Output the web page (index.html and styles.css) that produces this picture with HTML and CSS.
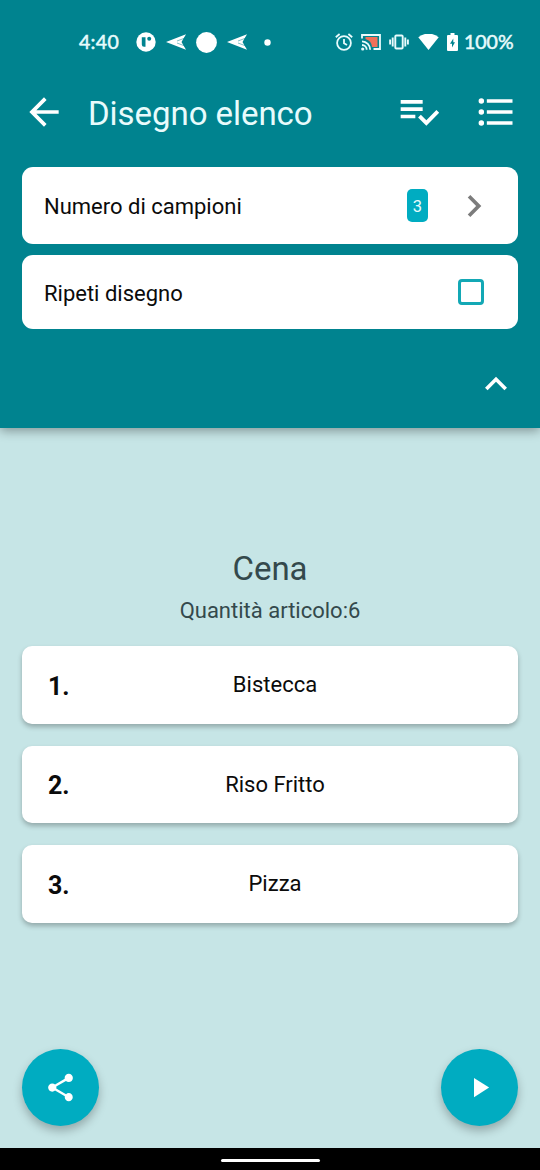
FILE: index.html
```html
<!DOCTYPE html>
<html lang="it">
<head>
<meta charset="utf-8">
<title>Disegno elenco</title>
<link rel="stylesheet" href="styles.css">
</head>
<body>
<div class="screen">
  <header class="header">
    <div class="status">
      <span class="clock">4:40</span>
      <div class="notifs">
        <svg width="20" height="20" viewBox="0 0 20 20"><circle cx="10" cy="10" r="9.700" fill="#fff"/><path d="M5.800 5.200h3.700v9.600H8a2.200 2.200 0 0 1-2.200-2.200z" fill="#00838f"/><circle cx="13.200" cy="6.800" r="2" fill="#00838f"/></svg>
        <svg width="20" height="16" viewBox="0 0 20 16"><path d="M0 8L20 .3 15.500 8 20 15.700z" fill="#fff"/><path d="M11 7L19 4M11 9l8 3" stroke="#00838f" stroke-width=".5"/></svg>
        <svg width="21" height="21" viewBox="0 0 21 21"><circle cx="10.500" cy="10.500" r="10.400" fill="#fff"/></svg>
        <svg width="20" height="16" viewBox="0 0 20 16"><path d="M0 8L20 .3 15.500 8 20 15.700z" fill="#fff"/><path d="M11 7L19 4M11 9l8 3" stroke="#00838f" stroke-width=".5"/></svg>
        <svg class="more-dot" width="7" height="7" viewBox="0 0 7 7"><circle cx="3.500" cy="3.500" r="3.200" fill="#fff"/></svg>
      </div>
      <div class="system">
        <svg width="18" height="18" viewBox="0 0 18 18" fill="none" stroke="#e8fbfc" stroke-width="1.800"><circle cx="9" cy="10" r="6.900"/><path d="M9 6v4.300l3 1.800M.8 4.200L4.600 1M17.200 4.200L13.400 1"/></svg>
        <svg class="cast" width="20" height="18" viewBox="0 0 20 18"><path d="M4.500 4h12v10h-5.500A9 9 0 0 0 4.500 6z" fill="#f0705a"/><path d="M1 5.500V2h18v14h-6.500M1 8.300A8.500 8.500 0 0 1 9.200 16.800M1 12a4.800 4.800 0 0 1 4.700 4.800" fill="none" stroke="#e8fbfc" stroke-width="1.800"/><circle cx="1.700" cy="16" r="1.600" fill="#e8fbfc"/></svg>
        <svg class="vibrate" width="20" height="16" viewBox="0 0 20 16" fill="none" stroke="#e8fbfc" stroke-width="1.900"><rect x="6.300" y="1.500" width="7.400" height="13" rx="1"/><path d="M3.700 3.500v9M1.100 5.500v5M16.300 3.500v9M18.900 5.500v5"/></svg>
        <svg class="wifi" width="21" height="17" viewBox="0 0 21 17"><path d="M.3 3.300a16 16 0 0 1 20.400 0L10.500 16z" fill="#fff"/></svg>
        <svg class="battery" width="11" height="18" viewBox="0 0 11 18"><path d="M3.500 0h4v2H10q1 0 1 1v14q0 1-1 1H1q-1 0-1-1V3q0-1 1-1h2.500z" fill="#fff"/><path d="M6.300 5.500L3 10.700H5V14.500l3-5.200H6.300z" fill="#00838f"/></svg>
        <span class="percent">100%</span>
      </div>
    </div>
    <div class="toolbar">
      <svg class="icon back" viewBox="0 0 24 24"><path d="M20 11H7.830l5.590-5.590L12 4l-8 8 8 8 1.410-1.410L7.830 13H20z"/></svg>
      <h1 class="title">Disegno elenco</h1>
      <svg class="icon check-list" viewBox="0 0 24 24"><path d="M14 10H2v2h12zM14 6H2v2h12zM2 16h8v-2H2zM21.500 11.500L23 13l-6.990 7-4.510-4.500L13 14l3.010 3z"/></svg>
      <svg class="icon" viewBox="0 0 24 24"><circle cx="4" cy="6" r="1.500"/><circle cx="4" cy="12" r="1.500"/><circle cx="4" cy="18" r="1.500"/><path d="M7 5h14v2H7zM7 11h14v2H7zM7 17h14v2H7z"/></svg>
    </div>
    <div class="settings">
      <div class="setting samples">
        <span class="label">Numero di campioni</span>
        <span class="count">3</span>
        <svg class="icon chevron" viewBox="0 0 24 24"><path d="M8.590 16.590L13.170 12 8.590 7.410 10 6l6 6-6 6z"/></svg>
      </div>
      <div class="setting repeat">
        <span class="label">Ripeti disegno</span>
        <span class="checkbox"></span>
      </div>
    </div>
    <div class="collapse">
      <svg class="icon" viewBox="0 0 24 24"><path d="M12 8l-6 6 1.410 1.410L12 10.830l4.590 4.580L18 14z"/></svg>
    </div>
  </header>
  <main class="content">
    <h2 class="list-name">Cena</h2>
    <p class="quantity">Quantità articolo:6</p>
    <div class="items">
      <div class="item"><b class="number">1.</b><span class="name">Bistecca</span></div>
      <div class="item"><b class="number">2.</b><span class="name">Riso Fritto</span></div>
      <div class="item"><b class="number">3.</b><span class="name">Pizza</span></div>
    </div>
    <div class="actions">
      <div class="fab"><svg width="33" height="33" viewBox="0 0 24 24"><path d="M18 16.080c-.76 0-1.440.3-1.960.77L8.910 12.700c.05-.23.09-.46.09-.7s-.04-.47-.09-.7l7.050-4.110c.54.5 1.250.81 2.040.81 1.660 0 3-1.340 3-3s-1.340-3-3-3-3 1.340-3 3c0 .24.04.47.09.7L8.040 9.810C7.500 9.310 6.790 9 6 9c-1.660 0-3 1.340-3 3s1.340 3 3 3c.79 0 1.500-.31 2.040-.81l7.120 4.160c-.05.21-.08.43-.08.65 0 1.610 1.310 2.920 2.920 2.920s2.920-1.310 2.920-2.920-1.310-2.920-2.920-2.920z"/></svg></div>
      <div class="fab"><svg width="33" height="33" viewBox="0 0 24 24"><path d="M8 5v14l11-7z"/></svg></div>
    </div>
  </main>
  <div class="navbar"><span class="handle"></span></div>
</div>
</body>
</html>
```
FILE: styles.css
```css
* { box-sizing: border-box; }
body { margin: 0; font-family: Roboto, sans-serif; color: #0b0b0b; }
svg { display: block; flex: none; }
h1, h2, p { margin: 0; font-weight: 400; }
.screen { width: 540px; height: 1170px; display: flex; flex-direction: column; background: #c6e5e6; overflow: hidden; }
.header { height: 427.500px; flex: none; background: #00838f; box-shadow: 0 3px 10px rgba(0, 0, 0, .34); }
.status { height: 84px; padding: 0 27px 0 79px; display: flex; align-items: center; color: #e8fbfc; font: 400 19.500px/24px Lato, sans-serif; }
.clock { width: 57px; letter-spacing: .3px; -webkit-text-stroke: .5px; }
.notifs { display: flex; align-items: center; gap: 10px; }
.more-dot { margin-left: 7px; }
.system { margin-left: auto; display: flex; align-items: center; }
.cast { margin-left: 8px; }
.vibrate { margin-left: 8px; }
.wifi { margin-left: 9px; }
.battery { margin-left: 8px; }
.percent { width: 49px; margin-left: 6px; white-space: nowrap; -webkit-text-stroke: .5px; }
.toolbar { height: 83px; padding: 0 22.500px 27px 21.500px; display: flex; align-items: center; }
.icon { width: 44px; height: 44px; fill: #fff; }
.title { flex: 1; padding: 4px 0 0 22.500px; font-size: 33px; line-height: 40px; letter-spacing: -.05px; color: #e8fbfc; white-space: nowrap; }
.check-list { margin: 0 33px 2px 0; }
.settings { padding: 0 22px; display: flex; flex-direction: column; gap: 11px; }
.setting { display: flex; align-items: center; padding-left: 22px; background: #fff; border-radius: 11px; font-size: 22px; }
.samples { height: 77px; padding-right: 22px; }
.repeat { height: 73.500px; padding-right: 34px; }
.label { flex: 1; padding-top: 2px; }
.repeat .label { padding-top: 3px; }
.count { width: 21px; height: 33px; margin-right: 24px; border-radius: 5px; background: #00acc1; color: #e8fbfc; font-size: 16.500px; line-height: 35px; text-align: center; }
.chevron { fill: #7c7c7c; }
.checkbox { width: 26px; height: 26px; border: 3px solid #13a8b5; border-radius: 4px; }
.collapse { padding: 33px 22px 0; display: flex; justify-content: flex-end; }
.content { flex: 1; padding: 118px 22px 22px; display: flex; flex-direction: column; text-align: center; color: #34494c; }
.list-name { font-size: 33px; line-height: 46px; }
.quantity { padding-top: 1px; font-size: 22px; line-height: 36px; }
.items { margin-top: 17.500px; display: flex; flex-direction: column; gap: 22px; }
.item { height: 77.500px; display: grid; grid-template-columns: 60px 1fr 50px; align-items: center; background: #fff; border-radius: 10px; color: #0b0b0b; box-shadow: 0 3px 5px rgba(0, 0, 0, .26); }
.number { padding: 3px 0 0 26px; text-align: left; font-size: 25px; }
.name { font-size: 22px; }
.actions { margin-top: auto; display: flex; justify-content: space-between; }
.fab { width: 77px; height: 77px; display: flex; align-items: center; justify-content: center; border-radius: 50%; background: #00acc1; box-shadow: 0 5px 10px rgba(0, 0, 0, .26); }
.fab svg { fill: #fff; }
.navbar { height: 22px; display: flex; justify-content: center; align-items: center; padding-top: 2px; background: #000; }
.handle { width: 99px; height: 3px; border-radius: 2px; background: #fff; }
```
